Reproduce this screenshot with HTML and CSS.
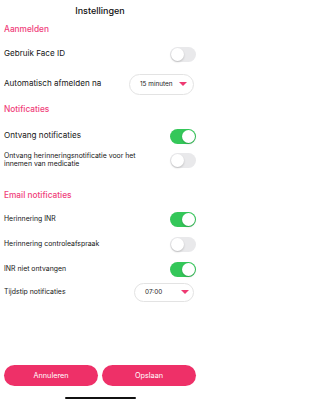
FILE: index.html
```html
<!DOCTYPE html>
<html lang="nl">
<head>
<meta charset="utf-8">
<title>Instellingen</title>
<link rel="stylesheet" href="styles.css">
</head>
<body>
<div class="screen">
  <header class="title">Instellingen</header>

  <h2 class="section s-aanmelden">Aanmelden</h2>
  <div class="row r-face">
    <span class="label big">Gebruik Face ID</span>
    <span class="toggle"></span>
  </div>
  <div class="row r-auto">
    <span class="label big">Automatisch afmelden na</span>
    <span class="select sel-min"><span class="sel-text">15 minuten</span><span class="caret"></span></span>
  </div>

  <h2 class="section s-notif">Notificaties</h2>
  <div class="row r-ontvang">
    <span class="label big">Ontvang notificaties</span>
    <span class="toggle on"></span>
  </div>
  <div class="row r-herin">
    <span class="label small">Ontvang herinneringsnotificatie voor het innemen van medicatie</span>
    <span class="toggle"></span>
  </div>

  <h2 class="section s-email">Email notificaties</h2>
  <div class="row r-inr">
    <span class="label small">Herinnering INR</span>
    <span class="toggle on"></span>
  </div>
  <div class="row r-controle">
    <span class="label small">Herinnering controleafspraak</span>
    <span class="toggle"></span>
  </div>
  <div class="row r-niet">
    <span class="label small">INR niet ontvangen</span>
    <span class="toggle on"></span>
  </div>
  <div class="row r-tijd">
    <span class="label small">Tijdstip notificaties</span>
    <span class="select sel-time"><span class="sel-text">07:00</span><span class="caret"></span></span>
  </div>

  <div class="buttons">
    <button class="btn">Annuleren</button>
    <button class="btn">Opslaan</button>
  </div>
  <div class="home"><span class="home-bar"></span></div>
</div>
</body>
</html>
```

FILE: styles.css
```css
* { box-sizing: border-box; }
html, body { margin: 0; padding: 0; background: #fff; }
body {
  font-family: Inter, "Liberation Sans", Arial, sans-serif;
  color: #111;
  width: 200px;
}
.screen {
  height: 407px;
  display: flex;
  flex-direction: column;
  padding: 0 4px;
}
.title {
  height: 20px;
  display: flex;
  align-items: center;
  justify-content: center;
  font-size: 9px;
  font-weight: 500;
  color: #111;
}
.section {
  margin: 0;
  display: flex;
  align-items: center;
  font-size: 8.3px;
  font-weight: 500;
  color: #f0407a;
}
.s-aanmelden { height: 18px; }
.s-notif { height: 22px; }
.s-email { height: 22px; margin-top: 16px; }

.row {
  display: flex;
  align-items: center;
  justify-content: space-between;
}
.r-face { height: 32px; }
.r-auto { height: 28px; }
.r-ontvang { height: 32px; }
.r-herin { height: 16px; }
.r-inr { height: 26px; }
.r-controle { height: 24px; }
.r-niet { height: 26px; }
.r-tijd { height: 20px; }

.label { line-height: 1.15; color: #151515; }
.big { font-size: 8.1px; }
.small { font-size: 6.9px; }
.r-herin .label { max-width: 145px; }

.toggle {
  position: relative;
  flex: none;
  width: 26px;
  height: 15px;
  border-radius: 8px;
  background: #e9e9eb;
}
.toggle::after {
  content: "";
  position: absolute;
  top: 1px;
  left: 1px;
  width: 13px;
  height: 13px;
  border-radius: 50%;
  background: #fff;
  box-shadow: 0 1px 2px rgba(0,0,0,0.2);
}
.toggle.on { background: #34c759; }
.toggle.on::after { left: 12px; }

.select {
  flex: none;
  display: flex;
  align-items: center;
  justify-content: space-between;
  border: 1px solid #e3e3e3;
  border-radius: 11px;
  font-size: 6.4px;
  color: #222;
}
.sel-min { width: 65px; height: 21px; padding: 0 6px 0 10px; margin-right: 2px; }
.sel-time { width: 60px; height: 19px; padding: 0 4px 0 10px; margin-right: 2px; }
.caret {
  width: 0;
  height: 0;
  border-left: 4px solid transparent;
  border-right: 4px solid transparent;
  border-top: 4px solid #ee3a72;
}

.buttons {
  margin-top: auto;
  display: flex;
  gap: 4px;
}
.btn {
  flex: 1;
  height: 21px;
  border: none;
  border-radius: 11px;
  background: #ee3068;
  color: #fff;
  font-family: Inter, "Liberation Sans", Arial, sans-serif;
  font-size: 7.3px;
  padding: 0;
}
.home {
  height: 21px;
  display: flex;
  align-items: center;
  justify-content: center;
  padding-top: 2px;
}
.home-bar {
  width: 71px;
  height: 2px;
  border-radius: 1px;
  background: #111;
}
```
